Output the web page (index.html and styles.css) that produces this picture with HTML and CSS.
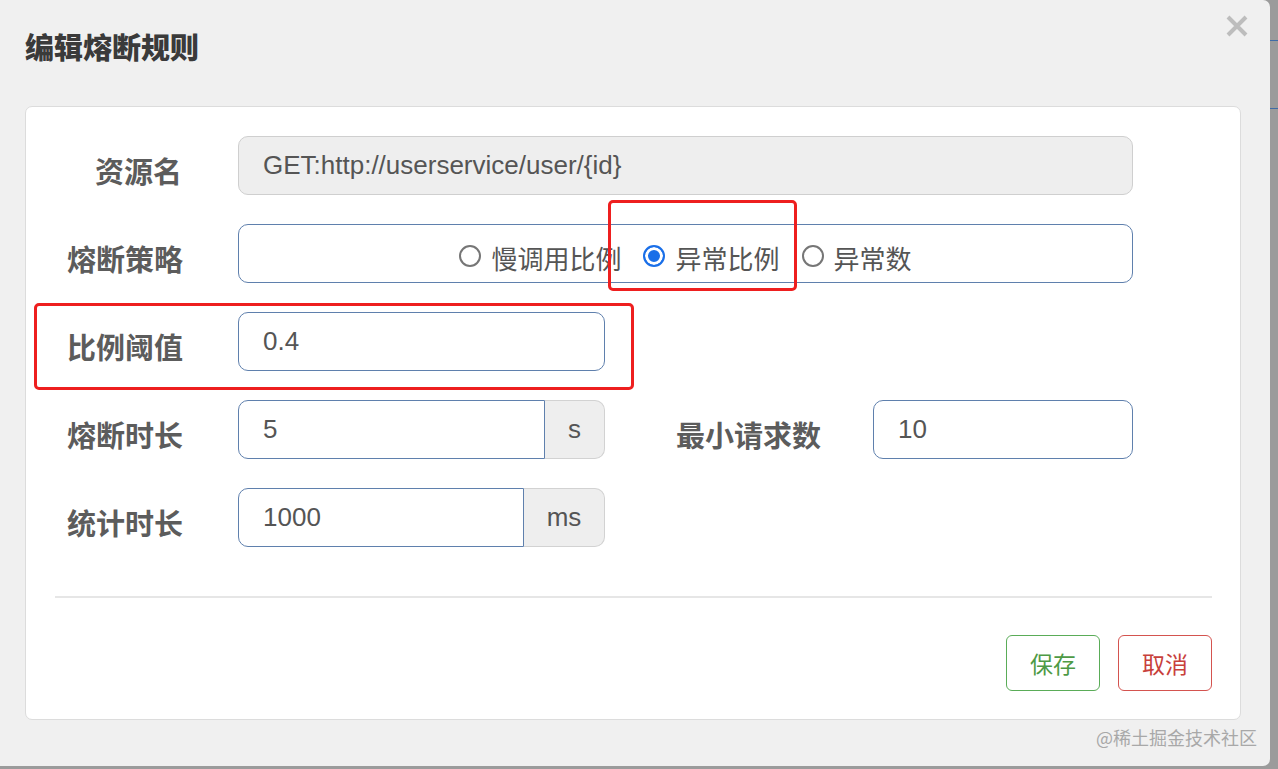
FILE: index.html
```html
<!DOCTYPE html>
<html lang="zh-CN">
<head>
  <meta charset="UTF-8" />
  <meta name="viewport" content="width=device-width, initial-scale=1.0" />
  <title>编辑熔断规则</title>
  <link rel="stylesheet" href="styles.css">
</head>
<body>
  <div class="modal">
    <div class="modal-header">
      <h1>编辑熔断规则</h1>
      <button type="button" class="close-btn" aria-label="close">
        <svg width="22" height="22" viewBox="0 0 22 22"><path d="M2 2L20 20M20 2L2 20" stroke="#bdbdbd" stroke-width="4" fill="none"/></svg>
      </button>
    </div>

    <div class="panel">
      <form class="form-body">
        <div class="row">
          <label class="label">资源名</label>
          <input type="text" class="field field-disabled w-full" value="GET:http://userservice/user/{id}" disabled>
        </div>

        <div class="row">
          <label class="label">熔断策略</label>
          <div class="field radio-box w-full">
            <span class="radio"><span class="dot"></span>慢调用比例</span>
            <span class="radio checked"><span class="dot"></span>异常比例</span>
            <span class="radio"><span class="dot"></span>异常数</span>
          </div>
        </div>

        <div class="row">
          <label class="label">比例阈值</label>
          <input type="text" class="field w-half" value="0.4">
        </div>

        <div class="row">
          <label class="label">熔断时长</label>
          <div class="input-group">
            <input type="text" class="field group-input w-s" value="5">
            <span class="addon w-addon-s">s</span>
          </div>
          <label class="label label-wide">最小请求数</label>
          <input type="text" class="field w-min" value="10">
        </div>

        <div class="row">
          <label class="label">统计时长</label>
          <div class="input-group">
            <input type="text" class="field group-input w-ms" value="1000">
            <span class="addon w-addon-ms">ms</span>
          </div>
        </div>
      </form>

      <div class="divider"></div>

      <div class="footer">
        <button type="button" class="btn btn-save">保存</button>
        <button type="button" class="btn btn-cancel">取消</button>
      </div>
    </div>
  </div>

  <div class="mark mark-strategy"></div>
  <div class="mark mark-ratio"></div>
  <div class="watermark">@稀土掘金技术社区</div>
</body>
</html>
```

FILE: styles.css
```css
body {
  margin: 0;
  width: 1278px;
  height: 769px;
  overflow: hidden;
  position: relative;
  background-color: #9b9b9b;
  background-image:
    linear-gradient(#3f6ba6, #3f6ba6),
    linear-gradient(#3f6ba6, #3f6ba6);
  background-repeat: no-repeat;
  background-size: 8px 1px, 8px 1px;
  background-position: 1270px 40px, 1270px 108px;
  font-family: "Liberation Sans", Arial, "Noto Sans CJK SC", sans-serif;
  color: #555;
}
.modal {
  position: relative;
  width: 1270px;
  height: 766px;
  background: #f0f0f0;
  border-radius: 0 7px 7px 0;
}
.modal-header {
  height: 106px;
  box-sizing: border-box;
  padding: 26px 25px 0;
}
.modal-header h1 {
  margin: 0;
  font-family: "Noto Sans CJK SC", sans-serif;
  font-size: 29px;
  line-height: 40px;
  font-weight: 900;
  color: #3a3a3a;
}
.close-btn {
  position: absolute;
  top: 15px;
  right: 22px;
  padding: 0;
  border: none;
  background: none;
  line-height: 0;
}
.panel {
  margin: 0 29px 0 25px;
  height: 614px;
  box-sizing: border-box;
  padding-top: 29px;
  background: #fff;
  border: 1px solid #dcdcdc;
  border-radius: 7px;
}
.form-body {
  padding-left: 41px;
}
.row {
  display: flex;
  align-items: center;
  height: 59px;
  margin-bottom: 29px;
}
.label {
  width: 115px;
  margin-right: 56px;
  padding-top: 8px;
  text-align: right;
  font-family: "Noto Sans CJK SC", sans-serif;
  font-size: 29px;
  font-weight: bold;
  color: #5c5c5c;
  white-space: nowrap;
}
.label-wide {
  width: 216px;
  margin-right: 52px;
}
.field {
  height: 59px;
  box-sizing: border-box;
  padding: 0 24px;
  border: 1px solid #5f80ad;
  border-radius: 10px;
  background: #fff;
  font-family: "Liberation Sans", Arial, sans-serif;
  font-size: 26px;
  color: #555;
  outline: none;
}
.field-disabled {
  background: #eee;
  border-color: #cfcfcf;
}
.w-full { width: 895px; }
.w-half { width: 367px; }
.w-min { width: 260px; }
.w-s { width: 307px; }
.w-ms { width: 286px; }
.input-group {
  display: flex;
}
.group-input {
  border-radius: 10px 0 0 10px;
}
.addon {
  display: flex;
  align-items: center;
  justify-content: center;
  height: 59px;
  box-sizing: border-box;
  background: #eee;
  border: 1px solid #d2d2d2;
  border-left: none;
  border-radius: 0 10px 10px 0;
  font-size: 26px;
  color: #555;
}
.w-addon-s { width: 60px; }
.w-addon-ms { width: 81px; }
.radio-box {
  display: flex;
  align-items: center;
  justify-content: center;
  gap: 22px;
  padding-top: 8px;
  font-family: "Noto Sans CJK SC", sans-serif;
  font-size: 26px;
}
.radio {
  display: flex;
  align-items: center;
  gap: 10px;
  color: #555;
}
.dot {
  width: 22px;
  height: 22px;
  box-sizing: border-box;
  border: 2px solid #767676;
  border-radius: 50%;
  margin-top: -4px;
}
.checked .dot {
  border-color: #1a6fe8;
  background: #1a6fe8;
  box-shadow: inset 0 0 0 3px #fff;
}
.divider {
  height: 2px;
  margin: 49px 28px 0 29px;
  background: #e6e6e6;
}
.footer {
  display: flex;
  justify-content: flex-end;
  gap: 18px;
  padding: 37px 28px 0 0;
}
.btn {
  width: 94px;
  height: 56px;
  border-radius: 6px;
  background: #fff;
  font-family: "Noto Sans CJK SC", sans-serif;
  font-size: 23px;
  cursor: pointer;
}
.btn-save {
  border: 1px solid #5aac58;
  color: #4e9a45;
}
.btn-cancel {
  border: 1px solid #d4534f;
  color: #c8403b;
}
.mark {
  position: absolute;
  border: 3px solid #ee1f1f;
  border-radius: 5px;
  box-sizing: border-box;
}
.mark-strategy {
  left: 608px;
  top: 200px;
  width: 189px;
  height: 91px;
}
.mark-ratio {
  left: 34px;
  top: 303px;
  width: 600px;
  height: 87px;
}
.watermark {
  position: absolute;
  right: 21px;
  top: 724px;
  font-family: "Noto Sans CJK SC", sans-serif;
  font-size: 18px;
  color: #a8a8a8;
}
```
